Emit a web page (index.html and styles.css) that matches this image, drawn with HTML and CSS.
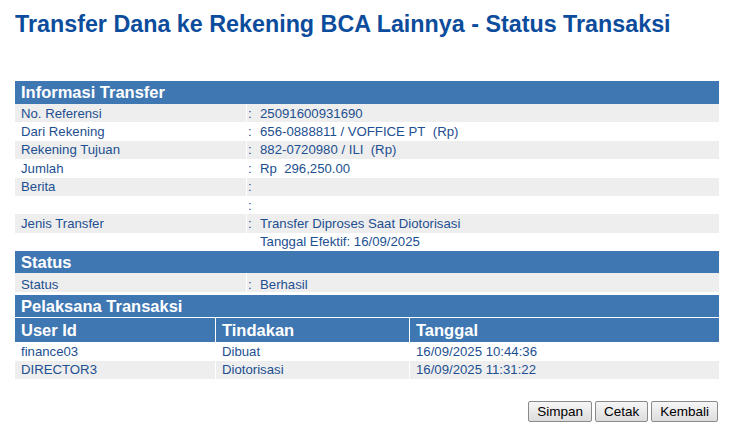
FILE: index.html
```html
<!DOCTYPE html>
<html lang="id">
<head>
  <meta charset="UTF-8">
  <title>Transfer Dana ke Rekening BCA Lainnya - Status Transaksi</title>
  <link rel="stylesheet" href="styles.css">
</head>
<body>
  <div class="page">
    <h1 class="page-title">Transfer Dana ke Rekening BCA Lainnya - Status Transaksi</h1>

    <table class="info-table">
      <tr><th colspan="2" class="section-head">Informasi Transfer</th></tr>
      <tr class="alt"><td class="label">No. Referensi</td><td class="value"><span class="colon">:</span>25091600931690</td></tr>
      <tr><td class="label">Dari Rekening</td><td class="value"><span class="colon">:</span>656-0888811 / VOFFICE PT&nbsp; (Rp)</td></tr>
      <tr class="alt"><td class="label">Rekening Tujuan</td><td class="value"><span class="colon">:</span>882-0720980 / ILI&nbsp; (Rp)</td></tr>
      <tr><td class="label">Jumlah</td><td class="value"><span class="colon">:</span>Rp&nbsp; 296,250.00</td></tr>
      <tr class="alt"><td class="label">Berita</td><td class="value"><span class="colon">:</span></td></tr>
      <tr><td class="label"></td><td class="value"><span class="colon">:</span></td></tr>
      <tr class="alt"><td class="label">Jenis Transfer</td><td class="value"><span class="colon">:</span>Transfer Diproses Saat Diotorisasi</td></tr>
      <tr><td class="label"></td><td class="value"><span class="colon"></span>Tanggal Efektif: 16/09/2025</td></tr>
    </table>

    <table class="info-table">
      <tr><th colspan="2" class="section-head short">Status</th></tr>
      <tr class="alt status-row"><td class="label">Status</td><td class="value"><span class="colon">:</span>Berhasil</td></tr>
    </table>

    <table class="info-table spaced">
      <tr><th class="section-head short">Pelaksana Transaksi</th></tr>
    </table>

    <table class="user-table">
      <tr>
        <th class="col-user">User Id</th>
        <th class="col-action">Tindakan</th>
        <th class="col-date">Tanggal</th>
      </tr>
      <tr>
        <td>finance03</td>
        <td>Dibuat</td>
        <td>16/09/2025 10:44:36</td>
      </tr>
      <tr class="alt">
        <td>DIRECTOR3</td>
        <td>Diotorisasi</td>
        <td>16/09/2025 11:31:22</td>
      </tr>
    </table>

    <div class="actions">
      <button class="btn">Simpan</button>
      <button class="btn">Cetak</button>
      <button class="btn">Kembali</button>
    </div>
  </div>
</body>
</html>
```

FILE: styles.css
```css
* {
  box-sizing: border-box;
}

body {
  margin: 0;
  font-family: "Liberation Sans", Arial, sans-serif;
  background: #ffffff;
  color: #1d4f91;
}

.page {
  width: 719px;
  padding: 11px 0 0 15px;
}

.page-title {
  margin: 0 0 43px;
  font-size: 23.3px;
  font-weight: bold;
  color: #0c4c9c;
  white-space: nowrap;
}

table {
  width: 704px;
  border-collapse: separate;
  border-spacing: 0;
}

.info-table td,
.info-table th,
.user-table td,
.user-table th {
  padding: 0 0 0 6px;
  text-align: left;
  vertical-align: middle;
}

.section-head {
  height: 23px;
  background: #3f77b3;
  color: #ffffff;
  font-size: 16.5px;
  font-weight: bold;
}

.section-head.short {
  height: 22px;
}

.info-table td {
  height: 18.4px;
  font-size: 13.2px;
  line-height: 15px;
}

.info-table td.label {
  width: 232px;
  border-right: 1px solid #ffffff;
}

.info-table td.value {
  padding-left: 1px;
}

.info-table .status-row td {
  height: 19px;
  padding-top: 3px;
}

.colon {
  display: inline-block;
  width: 12px;
}

tr.alt td {
  background: #eeeeee;
}

.spaced {
  margin-top: 3px;
  margin-bottom: 1px;
}

.user-table th {
  height: 24px;
  background: #3f77b3;
  color: #ffffff;
  font-size: 16.5px;
  font-weight: bold;
}

.user-table td {
  height: 18.5px;
  font-size: 13.2px;
  line-height: 15px;
}

.user-table .col-user {
  width: 200px;
}

.user-table .col-action {
  width: 194px;
}

.user-table th + th,
.user-table td + td {
  border-left: 1px solid #ffffff;
}

.actions {
  display: flex;
  justify-content: flex-end;
  gap: 3px;
  width: 703px;
  margin-top: 22px;
}

.btn {
  height: 21px;
  padding: 0 8px;
  font-family: "Liberation Sans", Arial, sans-serif;
  font-size: 13.5px;
  color: #000000;
  background: linear-gradient(#f6f6f6, #dddddd);
  border: 1px solid #8a8a8a;
  border-radius: 2px;
}
```
